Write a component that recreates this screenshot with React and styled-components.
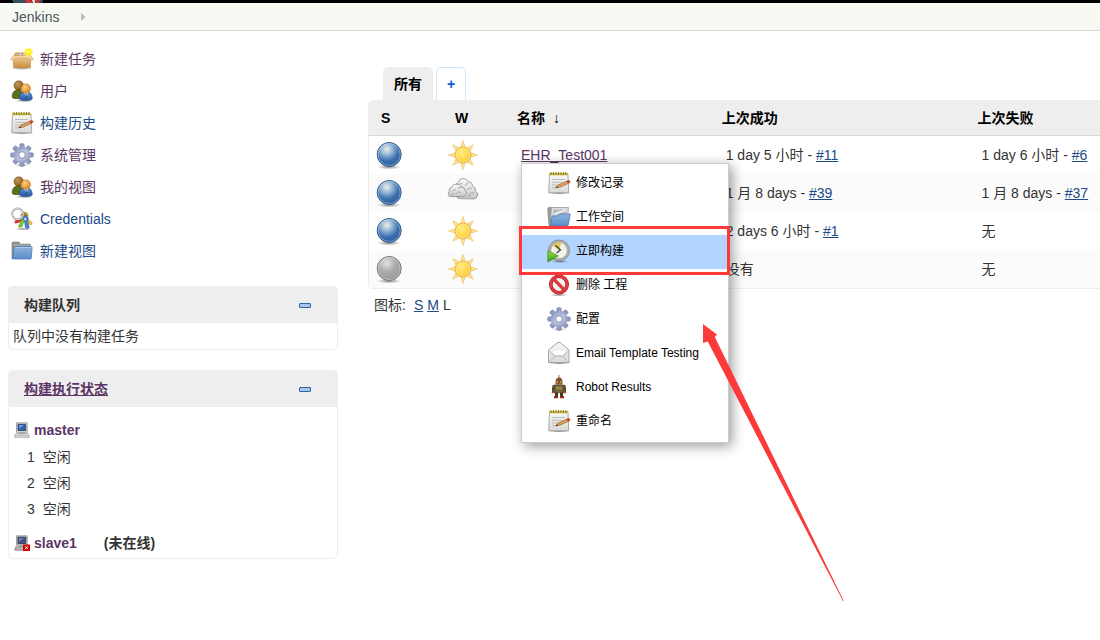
import React from "react";
import styled, { createGlobalStyle, css } from "styled-components";

const GlobalStyle = createGlobalStyle`
  * { box-sizing: border-box; }
  body {
    margin: 0;
    background: #fff;
    color: #333;
    font: 14px/16px "Liberation Sans", "Noto Sans CJK SC", sans-serif;
  }
  a { color: #204a87; }
`;

const Page = styled.div`
  position: relative;
  min-height: 100vh;
  overflow: hidden;
`;

const TopBar = styled.header`
  height: 3px;
  background: #000;
  svg { display: block; }
`;

const Breadcrumbs = styled.nav`
  display: flex;
  align-items: center;
  gap: 22px;
  height: 28px;
  padding: 0 12px;
  background: #f6faf2;
  border-bottom: 1px solid #d3d7cf;
  a { color: #4d545d; text-decoration: none; }
`;

const Columns = styled.div`
  display: flex;
  align-items: flex-start;
  gap: 30px;
  padding-left: 8px;
`;

const Sidebar = styled.aside`
  flex: 0 0 330px;
  padding-top: 12px;
`;

const TaskList = styled.ul`
  list-style: none;
  margin: 0 0 19px;
  padding: 0 2px;
`;

const TaskLink = styled.a`
  display: flex;
  align-items: center;
  gap: 6px;
  height: 32px;
  text-decoration: none;
  && { color: ${(p) => (p.$visited ? "#5c3566" : "#204a87")}; }
`;

const Panel = styled.section`
  margin-bottom: 20px;
  border: 1px solid #eee;
  border-radius: 5px;
`;

const PanelHeader = styled.div`
  display: flex;
  align-items: center;
  justify-content: space-between;
  height: 36px;
  padding: 0 26px 0 15px;
  background: #eee;
`;

const PanelTitle = styled.h2`
  margin: 0;
  font-size: 14px;
  line-height: 16px;
  a { color: #5c3566; }
`;

const CollapseButton = styled.button`
  width: 12px;
  height: 5px;
  padding: 0;
  border: 1px solid #2f66a8;
  border-radius: 1px;
  background: #a5c6e6;
`;

const QueueText = styled.p`
  margin: 0;
  padding: 5px 4px;
`;

const Computers = styled.div`
  padding: 15px 5px 7px;
`;

const Computer = styled.div`
  display: flex;
  align-items: center;
  gap: 4px;
  height: 16px;
  font-weight: bold;
  a { color: #5c3566; text-decoration: none; }
  span { margin-left: 23px; }
`;

const Executors = styled.ol`
  list-style: none;
  margin: 6px 0 13px;
  padding: 0 13px;
`;

const Executor = styled.li`
  display: flex;
  align-items: center;
  gap: 8px;
  height: 26px;
`;

const Main = styled.main`
  flex: 1;
  min-width: 0;
  padding-top: 36px;
`;

const Tabs = styled.div`
  display: flex;
  gap: 3px;
  padding-left: 15px;
`;

const Tab = styled.a`
  display: flex;
  align-items: center;
  justify-content: center;
  height: 33px;
  padding: 0 10px;
  border: 1px solid #cde7fb;
  border-bottom: 0;
  border-radius: 5px 5px 0 0;
  font-weight: bold;
  text-decoration: none;
  && { color: #0a5ad6; }
  ${(p) => p.$active && css`
    border-color: #eee;
    background: #eee;
    && { color: #000; }
  `}
`;

const Jobs = styled.table`
  width: 100%;
  table-layout: fixed;
  border: 1px solid #eee;
  border-width: 0 0 1px 1px;
  border-radius: 5px 0 0 5px;
  border-spacing: 0;
  tbody tr:nth-child(even) { background: #fbfbfb; }
`;

const Col = styled.col`
  width: ${(p) => p.$width};
`;

const Th = styled.th`
  height: 36px;
  padding: 0 0 0 ${(p) => (p.$icon ? "12px" : "0")};
  background: #eee;
  border-bottom: 1px solid #d8d8d8;
  color: #000;
  text-align: left;
  &:first-child { border-top-left-radius: 5px; }
`;

const SortArrow = styled.span`
  margin-left: 4px;
  font-weight: normal;
`;

const Td = styled.td`
  height: 38px;
  padding: 0 4px;
  white-space: nowrap;
  > svg { display: block; }
`;

const JobName = styled.span`
  position: relative;
  display: inline-block;
  a { color: #5c3566; }
`;

const Menu = styled.div`
  position: absolute;
  z-index: 1;
  top: 100%;
  left: 0;
  width: 208px;
  padding: 3px 0;
  background: #fff;
  border: 1px solid #ccc;
  box-shadow: 3px 3px 12px rgba(0, 0, 0, 0.4);
`;

const MenuItem = styled.a`
  display: flex;
  align-items: center;
  gap: 5px;
  height: 34px;
  padding: 0 0 2px 25px;
  font-size: 12px;
  text-decoration: none;
  && { color: #000; }
  background: ${(p) => (p.$selected ? "#b3d4ff" : "transparent")};
`;

const Highlight = styled.div`
  position: absolute;
  inset: 62px -2px auto -3px;
  height: 49px;
  border: 3px solid #fc3a39;
`;

const Pointer = styled.svg`
  position: absolute;
  top: 160px;
  left: 181px;
  pointer-events: none;
`;

const IconSizes = styled.p`
  display: flex;
  gap: 4px;
  margin: 8px 0 0;
  padding-left: 6px;
  span:first-child { margin-right: 4px; }
`;

const Defs = styled.svg`
  position: absolute;
`;

const Lin = ({ id, a, b, mid }) => (
  <linearGradient id={id} x1="0" y1="0" x2="0" y2="1">
    <stop offset="0" stopColor={a} />
    {mid && <stop offset="0.5" stopColor={mid} />}
    <stop offset="1" stopColor={b} />
  </linearGradient>
);

const Gradients = () => (
  <Defs width="0" height="0" aria-hidden="true">
    <defs>
      <radialGradient id="ballBlue" cx="0.4" cy="0.28" r="0.75">
        <stop offset="0" stopColor="#eef3e4" />
        <stop offset="0.3" stopColor="#9ab9d6" />
        <stop offset="0.65" stopColor="#3b70ae" />
        <stop offset="1" stopColor="#2a5c9f" />
      </radialGradient>
      <radialGradient id="ballGrey" cx="0.4" cy="0.28" r="0.75">
        <stop offset="0" stopColor="#e4e4e4" />
        <stop offset="0.5" stopColor="#aaa" />
        <stop offset="1" stopColor="#999" />
      </radialGradient>
      <radialGradient id="sunDisc" cx="0.4" cy="0.35" r="0.7">
        <stop offset="0" stopColor="#ffec86" />
        <stop offset="0.6" stopColor="#ffd94c" />
        <stop offset="1" stopColor="#f6bf43" />
      </radialGradient>
      <radialGradient id="headOrange" cx="0.4" cy="0.35" r="0.7">
        <stop offset="0" stopColor="#ffd08a" />
        <stop offset="1" stopColor="#d98213" />
      </radialGradient>
      <radialGradient id="headBrown" cx="0.4" cy="0.35" r="0.7">
        <stop offset="0" stopColor="#c99b58" />
        <stop offset="1" stopColor="#7c4f13" />
      </radialGradient>
      <radialGradient id="shade">
        <stop offset="0" stopColor="#000" stopOpacity="0.45" />
        <stop offset="1" stopColor="#000" stopOpacity="0" />
      </radialGradient>
      <linearGradient id="gear" gradientUnits="userSpaceOnUse" x1="4" y1="2" x2="20" y2="22">
        <stop offset="0" stopColor="#7585b8" />
        <stop offset="0.5" stopColor="#b4bbd8" />
        <stop offset="1" stopColor="#8b90b0" />
      </linearGradient>
      <Lin id="paper" a="#f8f8f7" b="#d9d9d7" />
      <Lin id="folder" a="#8fb5de" b="#5a8dc8" />
      <Lin id="box" a="#edc88b" b="#c98b3d" mid="#dba964" />
      <Lin id="cloud" a="#fbfbfa" b="#c6c6c4" />
      <Lin id="green" a="#9be04f" b="#2f9a08" />
      <Lin id="bluePerson" a="#5c90ce" b="#2858a0" />
    </defs>
  </Defs>
);

const Svg = ({ size = 24, children }) => (
  <svg width={size} height={size} viewBox={`0 0 ${size} ${size}`} aria-hidden="true">{children}</svg>
);

const BoxIcon = () => (
  <Svg>
    <ellipse cx="12" cy="21" rx="11" ry="2" fill="url(#shade)" />
    <path d="M4 8 5.500 5.500h13L20 8v4H4z" fill="#c59a5d" />
    <path d="M6.500 8.500 7.500 6.500h9l.8 2z" fill="#e4dac6" />
    <path d="M8 8.500 9 6.700M12 8.500 12.500 6.700" stroke="#8d8069" />
    <path d="M3.500 10.500h17V20q0 .8-1 .8h-15q-1 0-1-.8z" fill="url(#box)" stroke="#bd8440" strokeWidth=".6" />
    <path d="M.6 12.500 3.700 8.500h16.800l3 4-2.800.9-1.600-2.200H5l-1.700 2.200z" fill="#f2d5a4" stroke="#cf9f5e" strokeWidth=".6" />
    <circle cx="18.500" cy="5" r="4.500" fill="#fff45c" opacity=".7" />
    <circle cx="18.500" cy="5" r="3" fill="#fff200" />
    <circle cx="18.300" cy="4.800" r="1.300" fill="#fffcc4" />
  </Svg>
);

const UsersIcon = () => (
  <Svg>
    <ellipse cx="14" cy="21.500" rx="9" ry="2" fill="url(#shade)" />
    <path d="M2.300 18.500q-.5-7 5-7.500h3l4.500 5-1 3.500H5q-2.300 0-2.700-1z" fill="#55721b" stroke="#36500c" strokeWidth=".7" />
    <circle cx="8.700" cy="6.500" r="4.800" fill="url(#headBrown)" stroke="#714710" strokeWidth=".4" />
    <path d="M9.500 20q-.2-6.500 4.500-7h4q4.500.8 4.200 7-1.700 1.600-6.200 1.600-4.700 0-6.500-1.600z" fill="url(#bluePerson)" stroke="#24508e" strokeWidth=".6" />
    <path d="M13.800 13h4.400L16.500 19z" fill="#f5f5f5" />
    <path d="m15.600 14.200.8-.4.6 5-.8 1-.8-1z" fill="#24508e" />
    <circle cx="15.900" cy="9.500" r="4.700" fill="url(#headOrange)" stroke="#b96e15" strokeWidth=".4" />
  </Svg>
);

const NotepadIcon = () => (
  <Svg>
    <ellipse cx="12" cy="22.300" rx="11.500" ry="1.300" fill="url(#shade)" />
    <path d="M2.500 3h18.500l.7 18.700h-20z" fill="url(#paper)" stroke="#999" strokeWidth=".8" />
    <path d="M5 8.500h13M5 11.300h10M5 14h8M5 16.800h5" stroke="#bcbcba" />
    <path d="M2.200 1.800h18.600v2.500H2.200z" fill="#c9ba45" />
    <path d="M4 1v3M6.500 1v3M9 1v3M11.500 1v3M14 1v3M16.500 1v3M19 1v3" stroke="#857a24" strokeWidth=".9" />
    <path d="m9.500 16.300 1.800-2.300 8.800-4 1.300 2.300-8.900 4z" fill="#dfa35c" stroke="#99601d" strokeWidth=".7" />
    <path d="m19.700 10.200 1.500-.7q2-.2 2 1.500l-1.700 1.300z" fill="#d33c2b" stroke="#a12b1c" strokeWidth=".4" />
    <path d="m8.300 17.300 1.700-2 .9 1.500z" fill="#3b2a18" />
  </Svg>
);

const GearIcon = () => (
  <Svg>
    <ellipse cx="12" cy="22.300" rx="7" ry="1.500" fill="url(#shade)" />
    <g fill="url(#gear)" stroke="#7b85ab" strokeWidth=".6">
      {[0, 45, 90, 135, 180, 225, 270, 315].map((r) => (
        <path key={r} d="M8.700 6.500Q10 4.500 10 1q2-.8 4 0 0 3.500 1.300 5.500z" transform={`rotate(${r} 12 12)`} />
      ))}
    </g>
    <circle cx="12" cy="12" r="7.700" fill="url(#gear)" />
    <circle cx="12" cy="12" r="5" fill="none" stroke="#c8cee4" strokeOpacity=".7" />
    <circle cx="12" cy="12" r="3.200" fill="#fff" stroke="#7781a8" strokeWidth=".7" />
  </Svg>
);

const KeysIcon = () => (
  <Svg>
    <ellipse cx="13" cy="22" rx="8" ry="1.500" fill="url(#shade)" />
    <path d="m15 9 7 6.500v2.300l-2.200-.4L14 11z" fill="#eac642" stroke="#ba961c" strokeWidth=".5" />
    <path d="m12.500 10-8 4 .5 2.500 3-.5 6-3z" fill="#e02b27" />
    <path d="m12.500 10-4 9.500 1.500 1.300 2-1 3-8z" fill="#72cb28" stroke="#43900d" strokeWidth=".4" />
    <path d="M10.500 9q0-3.500 3.500-4.200 4 0 4.500 4l-1.500 2z" fill="#a8a43a" />
    <path d="M11.500 9.500q-.2-2.500 2.500-2.800 2.500.3 3 2.500z" fill="#d05a32" />
    <path d="M12.800 10q3-3 5.500.8l-.5 3 1.500 6.700-2 1.700-2-1.700-.8-6.500-1.700-1.700z" fill="#4f84cd" stroke="#2a5898" strokeWidth=".5" />
    <circle cx="7.700" cy="7" r="5.500" fill="none" stroke="#8e8e8e" strokeWidth="1.800" />
    <circle cx="7.700" cy="7" r="5.500" fill="none" stroke="#f2f2f2" strokeWidth=".8" />
    <circle cx="15.200" cy="12" r="1" fill="#fff" />
  </Svg>
);

const FolderIcon = () => (
  <Svg>
    <path d="M2 19.500V4q0-1 1-1h6l1.200 2h9.300q1 0 1 1v13.500z" fill="#8f928f" stroke="#747774" strokeWidth=".6" />
    <path d="M3 6h16.500" stroke="#b4b7b4" />
    <path d="M4.300 8.500q0-1 1-1h15.900q1 0 .9 1l-.8 10.500q-.1 1-1 1H3.200q-1 0-.8-1z" fill="url(#folder)" stroke="#4477b4" strokeWidth=".7" />
    <path d="M5.200 8.500h16" stroke="#a9c8e8" />
  </Svg>
);

const WorkspaceIcon = () => (
  <Svg>
    <path d="M2 20.500.7 4q0-1.500 1.500-1.500h4l1 1.500h12v16.500z" fill="#9a9d9a" stroke="#858885" strokeWidth=".7" />
    <path d="m3.500 14 .9-11.500h17L20.500 15z" fill="#dedede" stroke="#8d8d8d" strokeWidth=".7" />
    <path d="m6 12 .5-7.500h12.800L18.600 12z" fill="#b9b9b9" />
    <path d="m7 9.500 12-4.500" stroke="#eaeaea" strokeWidth="2" />
    <path d="M5 11h6l1.500-2H23.300l-1.900 10.500q-.2 1-1.200 1H3.500z" fill="url(#folder)" stroke="#4477b4" strokeWidth=".7" />
  </Svg>
);

const BuildIcon = () => (
  <Svg>
    <ellipse cx="13" cy="22.500" rx="9" ry="1.500" fill="url(#shade)" />
    <circle cx="12" cy="11.500" r="10.500" fill="#b4b4b2" stroke="#757575" strokeWidth=".7" />
    <circle cx="12" cy="11.500" r="8.300" fill="#f3f2ea" stroke="#9a9a98" strokeWidth=".7" />
    <path d="M12.300 11.500 6 6.700q3.500-5 8-3z" fill="#dcc65a" />
    <path d="M8.500 6.500 13.500 11 9.500 14" fill="none" stroke="#444" strokeWidth="1.300" />
    <path d="M.8 11.500 11.300 17 .8 23z" fill="url(#green)" stroke="#3b931c" strokeWidth=".7" />
  </Svg>
);

const DeleteIcon = () => (
  <Svg>
    <ellipse cx="12" cy="22" rx="9" ry="1.500" fill="url(#shade)" />
    <circle cx="12" cy="11.500" r="8.200" fill="#f7f3f3" stroke="#b51a1a" strokeWidth="3.600" />
    <path d="m6.500 5.800 11.300 11.500" stroke="#c41f1f" strokeWidth="3.200" />
    <circle cx="12" cy="11.500" r="8.200" fill="none" stroke="#de3d3d" strokeWidth="2.400" />
    <path d="m6 5.300 12.300 12.500" stroke="#de3d3d" strokeWidth="2.200" />
  </Svg>
);

const MailIcon = () => (
  <Svg>
    <ellipse cx="12" cy="22.300" rx="11" ry="1.300" fill="url(#shade)" />
    <path d="M1.500 9 10.500 1.800q1.500-1 3 0L22 9v12.500H1.500z" fill="url(#paper)" stroke="#9a9c98" strokeWidth=".9" />
    <path d="M3 10.500 7 15h9.500l4-4.500M3.500 20 8 15.500M20 20l-4-4.500" fill="none" stroke="#b0b2af" strokeWidth=".9" />
    <path d="M5.500 10q2-1.500 4-.2 3-1.200 5 0 2-1 4 .2l-2.300 4H7.800z" fill="#fff" />
  </Svg>
);

const RobotIcon = () => (
  <Svg>
    <path d="M12 0v3" stroke="#75756b" />
    <path d="M9 7V5q0-2.500 3-2.500T15 5v2z" fill="#9a4b2e" />
    <path d="M8.500 5.500h7v4h-7z" fill="#665632" />
    <path d="M9.500 6.500h1.500v1.200H9.500zM13 6.500h1.500v1.200H13z" fill="#e8d25f" />
    <path d="M10 8.700h4" stroke="#d14428" />
    <path d="M5.500 10h13v3h-13z" fill="#5c4c2e" />
    <path d="M7 10h10v7.800H7z" fill="#71663a" stroke="#41371f" strokeWidth=".6" />
    <path d="M9 11.500h6v3H9z" fill="#99824a" />
    <path d="M5 12h2.100v5H5zM16.900 12H19v5h-2.100z" fill="#5b4c30" />
    <path d="M4.800 16.500h2v1.700h-2zM17.200 16.500h2v1.700h-2z" fill="#b13a2a" />
    <path d="M8 17.500h3V21H8zM13 17.500h3V21h-3z" fill="#443821" />
    <path d="M7 21h4v2.300H7zM13 21h4v2.300h-4z" fill="#8f2b20" />
  </Svg>
);

const BallIcon = ({ grey }) => (
  <Svg size={32}>
    <ellipse cx="16" cy="28" rx="12" ry="2.500" fill="url(#shade)" />
    <circle cx="16.200" cy="15.500" r="12" fill={grey ? "url(#ballGrey)" : "url(#ballBlue)"} stroke={grey ? "#757575" : "#315d8f"} />
    <circle cx="16.200" cy="15.500" r="11" fill="none" stroke="#fff" strokeOpacity=".35" />
  </Svg>
);

const SunIcon = () => (
  <Svg size={32}>
    <g fill="#ffe48a" stroke="#efc777" strokeWidth=".8">
      {[0, 45, 90, 135, 180, 225, 270, 315].map((r) => (
        <path key={r} d="M16 1.500 18 7.800h-4z" transform={`rotate(${r} 16 16)`} />
      ))}
    </g>
    <circle cx="16" cy="16" r="8" fill="url(#sunDisc)" stroke="#efb34b" />
    <circle cx="16" cy="16" r="6.900" fill="none" stroke="#ffed9d" strokeOpacity=".7" />
  </Svg>
);

const CloudIcon = () => (
  <Svg size={32}>
    <g fill="url(#cloud)" stroke="#8f8f8d" strokeWidth=".8">
      <path d="M11 21.500q-3-2-1.500-5.500Q6 13 8.500 9.500 8 6 11.500 5.500q.5-4 4.500-4 4 0 5 3.300 4.500 0 4.500 4.200 4 1.500 2.800 5 3.400 2 2.200 5-1 3-4 3z" />
      <path d="M2.500 19.500Q0 17.500 2 14.500q-.5-3.500 3-4.500 1-3.500 4.500-2.500Q13 6.500 14 10q4 0 4 3.500 2.500 1.500 1 4-1 2.500-3 2z" />
    </g>
    <g fill="none" stroke="#a7a7a5" strokeWidth=".9">
      <path d="M12 7.500q1.500-2 3.500-.5M18 9q.5-3 3.500-2.300M20 13q1.500-3 5-1.500M22 18q1-3 5-2M20 21q.5-3 4-2" />
      <path d="M5 14.500Q6 12 9 13M9 17.500q1-3.500 4.500-2M4 18q1-2 3-1.300M11 12q.5-2 3-2" />
    </g>
  </Svg>
);

const ComputerIcon = ({ offline }) => (
  <Svg size={16}>
    <path d="M2.500.8h10.700v9.500H2.500z" fill={offline ? "#bbb" : "#dedfda"} stroke="#8f918c" strokeWidth=".8" />
    <path d="M4 2.300h7.700v6.200H4z" fill={offline ? "#43507e" : "#315fac"} stroke="#243964" strokeWidth=".8" />
    <path d="M5 3h5L5 7z" fill={offline ? "#7681a6" : "#6e99d8"} />
    <path d="M5 10.500h6V12H5z" fill="#aaa" />
    <path d="M1.700 11.800h12.500l1.200 3.400H.6z" fill={offline ? "#aaa" : "#eee"} stroke="#8f918c" strokeWidth=".8" />
    <path d="M2.500 13.500h11" stroke="#bbb" />
    {offline && (
      <>
        <path d="M9 9.500h7V16H9z" fill="#d40000" />
        <path d="m11 11.200 3 3m0-3-3 3" stroke="#fff" />
      </>
    )}
  </Svg>
);

const tasks = [
  { label: "新建任务", icon: BoxIcon, visited: true },
  { label: "用户", icon: UsersIcon, visited: true },
  { label: "构建历史", icon: NotepadIcon },
  { label: "系统管理", icon: GearIcon, visited: true },
  { label: "我的视图", icon: UsersIcon, visited: true },
  { label: "Credentials", icon: KeysIcon },
  { label: "新建视图", icon: FolderIcon },
];

const menuItems = [
  { label: "修改记录", icon: NotepadIcon },
  { label: "工作空间", icon: WorkspaceIcon },
  { label: "立即构建", icon: BuildIcon, selected: true },
  { label: "删除 工程", icon: DeleteIcon },
  { label: "配置", icon: GearIcon },
  { label: "Email Template Testing", icon: MailIcon },
  { label: "Robot Results", icon: RobotIcon },
  { label: "重命名", icon: NotepadIcon },
];

const jobs = [
  { name: "EHR_Test001", weather: SunIcon, success: ["1 day 5 小时", "#11"], failure: ["1 day 6 小时", "#6"] },
  { weather: CloudIcon, success: ["1 月 8 days", "#39"], failure: ["1 月 8 days", "#37"] },
  { weather: SunIcon, success: ["2 days 6 小时", "#1"], failure: ["无"] },
  { grey: true, weather: SunIcon, success: ["没有"], failure: ["无"] },
];

const Build = ({ value: [age, number] }) => (
  <>
    {age}
    {number && <> - <a href="#build">{number}</a></>}
  </>
);

const ContextMenu = () => (
  <Menu>
    {menuItems.map(({ label, icon: Icon, selected }) => (
      <MenuItem key={label} href="#menu" $selected={selected}>
        <Icon />
        {label}
      </MenuItem>
    ))}
    <Highlight />
    <Pointer width="142" height="280" viewBox="0 0 142 280" aria-hidden="true">
      <path d="M0 0 14 10.500 11.800 13 140.800 277h-.8L4.700 17.500 0 19z" fill="#fc3a39" />
    </Pointer>
  </Menu>
);

export default function App() {
  return (
    <Page>
      <GlobalStyle />
      <Gradients />
      <TopBar>
        <svg width="48" height="3" aria-hidden="true">
          <path d="M12 0h31l-1 3H14z" fill="#34505e" />
          <path d="M25 0h6l1 3h-5zM35 0h5l-1 3h-3z" fill="#d6302f" />
          <path d="M32 0h3v3h-2z" fill="#ddd" />
        </svg>
      </TopBar>
      <Breadcrumbs>
        <a href="#home">Jenkins</a>
        <svg width="5" height="8" aria-hidden="true"><path d="M0 0 4.500 4 0 8z" fill="#b9bbb6" /></svg>
      </Breadcrumbs>
      <Columns>
        <Sidebar>
          <TaskList>
            {tasks.map(({ label, icon: Icon, visited }) => (
              <li key={label}>
                <TaskLink href="#task" $visited={visited}>
                  <Icon />
                  {label}
                </TaskLink>
              </li>
            ))}
          </TaskList>
          <Panel>
            <PanelHeader>
              <PanelTitle>构建队列</PanelTitle>
              <CollapseButton aria-label="collapse" />
            </PanelHeader>
            <QueueText>队列中没有构建任务</QueueText>
          </Panel>
          <Panel>
            <PanelHeader>
              <PanelTitle><a href="#computers">构建执行状态</a></PanelTitle>
              <CollapseButton aria-label="collapse" />
            </PanelHeader>
            <Computers>
              <Computer><ComputerIcon /><a href="#master">master</a></Computer>
              <Executors>
                {[1, 2, 3].map((n) => (
                  <Executor key={n}><span>{n}</span><span>空闲</span></Executor>
                ))}
              </Executors>
              <Computer><ComputerIcon offline /><a href="#slave1">slave1</a><span>(未在线)</span></Computer>
            </Computers>
          </Panel>
        </Sidebar>
        <Main>
          <Tabs>
            <Tab href="#all" $active>所有</Tab>
            <Tab href="#new">+</Tab>
          </Tabs>
          <Jobs>
            <colgroup>
              <Col $width="74px" />
              <Col $width="74px" />
              <Col $width="28%" />
              <Col $width="35%" />
              <Col />
            </colgroup>
            <thead>
              <tr>
                <Th $icon>S</Th>
                <Th $icon>W</Th>
                <Th>名称<SortArrow> ↓</SortArrow></Th>
                <Th>上次成功</Th>
                <Th>上次失败</Th>
              </tr>
            </thead>
            <tbody>
              {jobs.map(({ name, grey, weather: Weather, success, failure }, i) => (
                <tr key={i}>
                  <Td><BallIcon grey={grey} /></Td>
                  <Td><Weather /></Td>
                  <Td>{name && <JobName><a href="#job">{name}</a><ContextMenu /></JobName>}</Td>
                  <Td><Build value={success} /></Td>
                  <Td><Build value={failure} /></Td>
                </tr>
              ))}
            </tbody>
          </Jobs>
          <IconSizes>
            <span>图标:</span>
            <a href="#small">S</a>
            <a href="#medium">M</a>
            <span>L</span>
          </IconSizes>
        </Main>
      </Columns>
    </Page>
  );
}
